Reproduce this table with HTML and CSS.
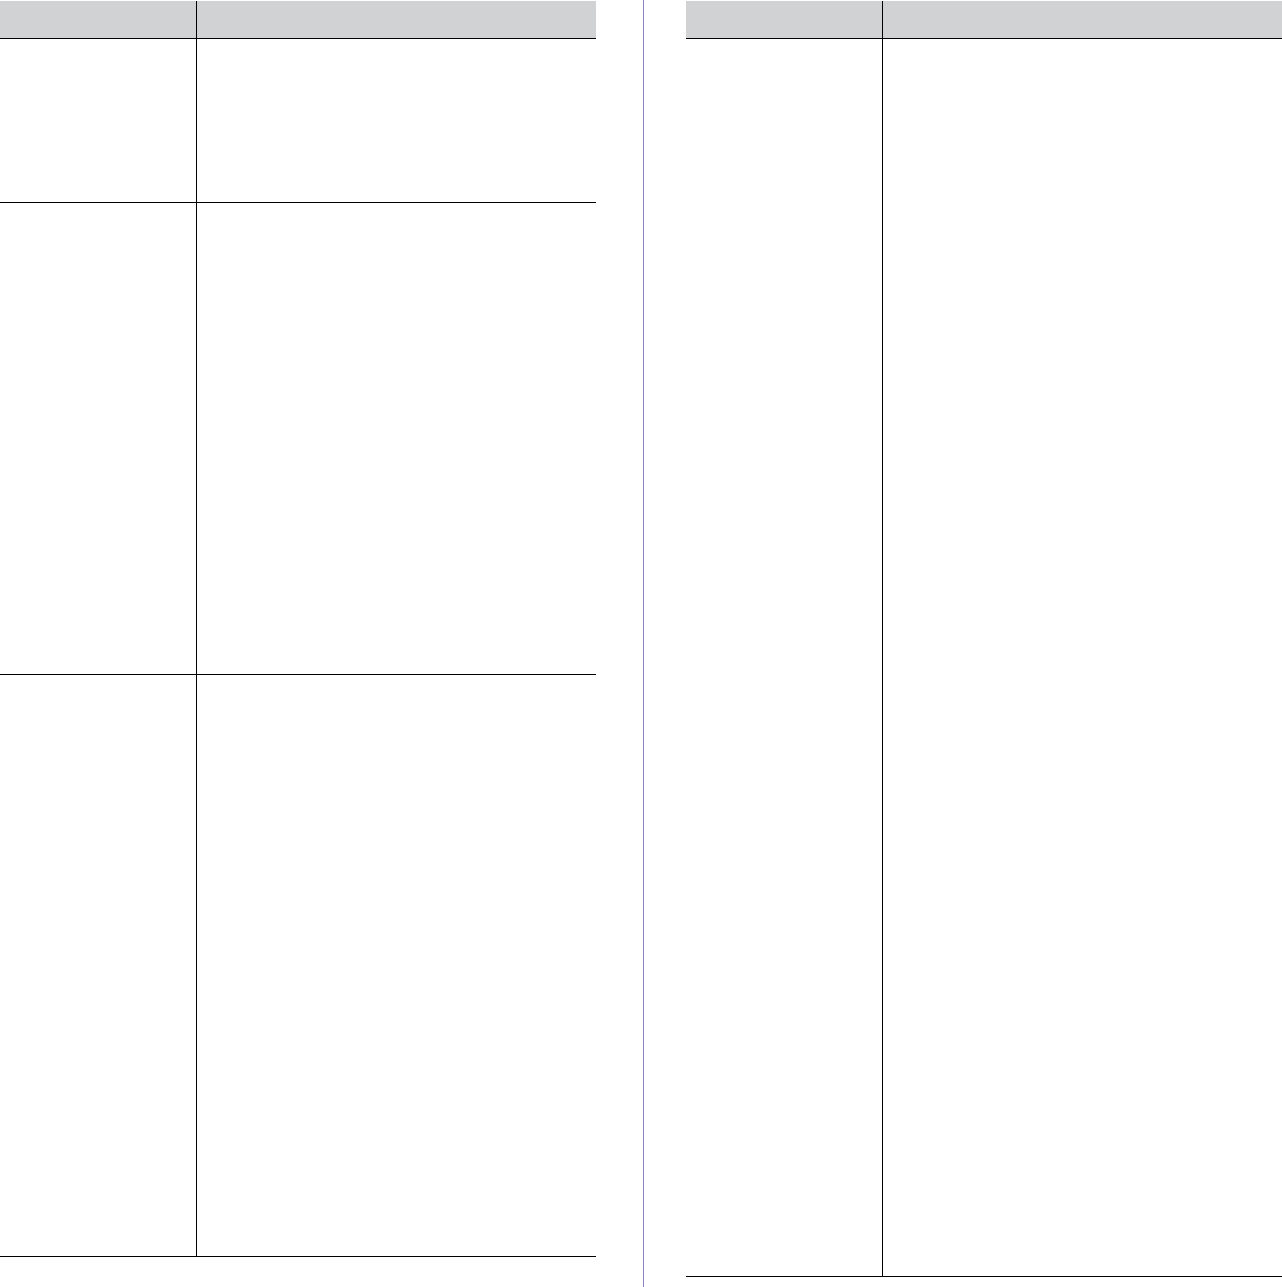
FILE: index.html
```html
<!DOCTYPE html>
<html lang="en">
<head>
    <meta charset="UTF-8">
    <meta name="viewport" content="width=device-width, initial-scale=1.0">
    <title>Tables</title>
    <link rel="stylesheet" href="styles.css">
</head>
<body>
    <div class="page">
        <div class="sheet">
            <div class="cell head key"></div>
            <div class="cell head"></div>
            <div class="cell key row-a"></div>
            <div class="cell row-a"></div>
            <div class="cell key row-b"></div>
            <div class="cell row-b"></div>
            <div class="cell key row-c"></div>
            <div class="cell row-c"></div>
        </div>

        <div class="divider"></div>

        <div class="sheet">
            <div class="cell head key"></div>
            <div class="cell head"></div>
            <div class="cell key row-long"></div>
            <div class="cell row-long"></div>
        </div>
    </div>
</body>
</html>
```

FILE: styles.css
```css
/* Reset */
* {
    margin: 0;
    padding: 0;
    box-sizing: border-box;
}
body {
    background: #ffffff;
    font-family: 'Liberation Sans', Arial, sans-serif;
    overflow: hidden;
}

/* Two column spread */
.page {
    display: flex;
    align-items: flex-start;
    height: 1287px;
}

.divider {
    width: 1px;
    height: 100%;
    margin-left: 47px;
    margin-right: 42px;
    background: #8b80bf;
}

/* Table */
.sheet {
    display: grid;
    grid-template-columns: 197px 1fr;
    width: 596px;
    padding-top: 1px;
}

.cell {
    border-bottom: 1px solid #000;
}
.key {
    border-right: 1px solid #000;
}

.head {
    height: 38px;
    background: #d1d2d4;
}

.row-a {
    height: 164px;
}
.row-b {
    height: 472px;
}
.row-c {
    height: 582px;
}
.row-long {
    height: 1238px;
}
```
